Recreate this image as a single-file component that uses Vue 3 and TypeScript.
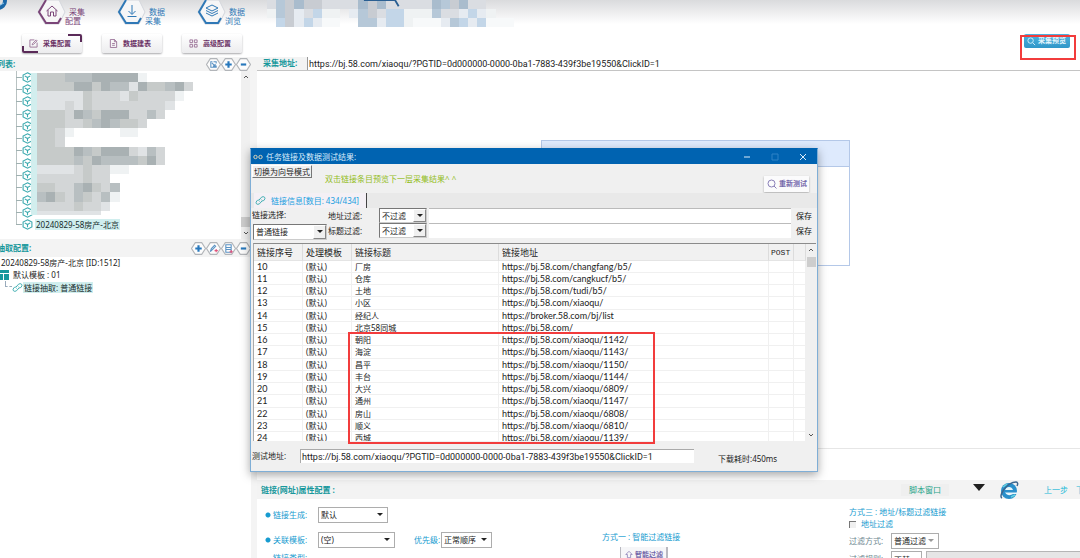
<script setup lang="ts">
import { ref } from 'vue'

interface LinkRow { id: number; title: string; url: string }

const collectUrl = ref('https://bj.58.com/xiaoqu/?PGTID=0d000000-0000-0ba1-7883-439f3be19550&ClickID=1')
const testUrl = ref(collectUrl.value)
const urlFilter = ref('')
const titleFilter = ref('')

const host = 'https://bj.58.com/'
const rows: LinkRow[] = [
  { id: 10, title: '厂房', url: host + 'changfang/b5/' },
  { id: 11, title: '仓库', url: host + 'cangkucf/b5/' },
  { id: 12, title: '土地', url: host + 'tudi/b5/' },
  { id: 13, title: '小区', url: host + 'xiaoqu/' },
  { id: 14, title: '经纪人', url: 'https://broker.58.com/bj/list' },
  { id: 15, title: '北京58同城', url: host },
  { id: 16, title: '朝阳', url: host + 'xiaoqu/1142/' },
  { id: 17, title: '海淀', url: host + 'xiaoqu/1143/' },
  { id: 18, title: '昌平', url: host + 'xiaoqu/1150/' },
  { id: 19, title: '丰台', url: host + 'xiaoqu/1144/' },
  { id: 20, title: '大兴', url: host + 'xiaoqu/6809/' },
  { id: 21, title: '通州', url: host + 'xiaoqu/1147/' },
  { id: 22, title: '房山', url: host + 'xiaoqu/6808/' },
  { id: 23, title: '顺义', url: host + 'xiaoqu/6810/' },
  { id: 24, title: '西城', url: host + 'xiaoqu/1139/' },
]

const tasks = Array.from({ length: 13 }, (_, i) => (i === 12 ? '20240829-58房产-北京' : ''))

/* Redacted areas: one letter per mosaic tile */
const shades: Record<string, string> = {
  a: '#a9b1b3', b: '#b8bfc1', c: '#c6cac9', d: '#d3d6d7', e: '#e0e3e5', f: '#eff2f3',
  m: '#a9bccd', n: '#b6c8d8', o: '#c3d6e8', p: '#c8ccd2', q: '#dadde2', r: '#e6ebf1', s: '#f7f9fa',
}
function tiles(lines: string[]) {
  return lines.flatMap((line, y) =>
    [...line].map((key, x) => ({ x, y, fill: shades[key] ?? 'none' })).filter((t) => t.fill !== 'none'),
  )
}
const taskMosaic = tiles([
  'cccbbbaaaaaf', 'ccccaacabbeaccbad', 'eeeeecdddecddddf', 'eeedecdddddddde', 'cccdabcaaaddbd',
  'cccddcbabccd', 'ccdf.....ff', 'ccd', 'ccccabcaaadebd', 'ccccbcabbbbcad', 'eeeedcddff',
  'dddddcdd', 'ccddbacdb', 'bacdbcdbf', 'ddddcdde', 'eeeeeee',
])
const headMosaic = tiles([
  'qnpmppqqqqmpmqqqqqmnpmqq', 'fnprqoff.rnpqoofffnqqrorf', '.oprorss..nnroofsssrnorosss',
])
</script>

<template>
  <div class="page">
    <header class="top">
      <div class="modules">
        <svg class="logo" viewBox="0 0 8 11"><circle cx="-2" cy="1" r="7" fill="none" stroke="#1b68a8" stroke-width="4" /><path d="M0 5L4 3" stroke="#8cc4e8" /></svg>
        <a class="module plum" href="#">
          <svg viewBox="0 0 30 26"><path class="hex" d="M8 1H22L28 13L22 25H8L1 13Z" /><path class="edge" d="M9 1L2 13L9 24H21L24 19" /><path class="glyph" d="M9.500 12L15 7L20.500 12M11 11V17H13.500V13H16.500V17H19V11" /></svg>
          <span><b>采集</b><b>配置</b></span>
        </a>
        <a class="module blue" href="#">
          <svg viewBox="0 0 30 26"><path class="hex" d="M8 1H22L28 13L22 25H8L1 13Z" /><path class="edge" d="M9 1L2 13L9 24H21L24 19" /><path class="glyph" d="M15 6V15M11.500 12L15 15.500L18.500 12M10.500 17.500H19.500" /></svg>
          <span><b>数据</b><b>采集</b></span>
        </a>
        <a class="module blue" href="#">
          <svg viewBox="0 0 30 26"><path class="hex" d="M8 1H22L28 13L22 25H8L1 13Z" /><path class="edge" d="M9 1L2 13L9 24H21L24 19" /><path class="glyph" d="M15 6L21 9L15 12L9 9ZM9 11.500L15 14.500L21 11.500M9 14L15 17L21 14" /></svg>
          <span><b>数据</b><b>浏览</b></span>
        </a>
        <svg class="head-mosaic" viewBox="0 0 28 3" preserveAspectRatio="none">
          <g shape-rendering="crispEdges">
            <rect v-for="t in headMosaic" :key="`${t.x}-${t.y}`" :x="t.x" :y="t.y" width="1" height="1" :fill="t.fill" />
          </g>
          <path d="M10.600 0H14L14.400 .7" stroke="#2a5f92" stroke-width=".2" />
        </svg>
      </div>
      <div class="actions">
        <button class="action current"><svg viewBox="0 0 10 10"><path d="M9 4V9H1V1H6M3.500 6.500L4 5L8 1L9 2L5 6Z" /></svg>采集配置</button>
        <button class="action"><svg viewBox="0 0 10 10"><path d="M1.500 .5H6L8.500 3V9.500H1.500ZM6 .5V3H8.500M3.500 5H6.500M3.500 7H6.500" /></svg>数据建表</button>
        <button class="action"><svg viewBox="0 0 10 10"><path d="M1 1H4V4H1ZM6 1H9V4H6ZM1 6H4V9H1ZM6 6H9V9H6Z" /></svg>高级配置</button>
        <div class="preview-wrap">
          <button class="preview"><svg viewBox="0 0 10 10"><circle cx="4" cy="4" r="3" /><path d="M6.500 6.500L9 9" /></svg>采集预览</button>
          <i class="mark"></i>
        </div>
      </div>
    </header>

    <div class="work">
      <aside class="side">
        <div class="bar">
          <strong class="cut">列表:</strong>
          <button aria-label="编辑" class="hexbtn"><svg viewBox="0 0 14 12"><path class="h" d="M4 .5H10L13.500 6L10 11.500H4L.5 6Z" /><path class="g thin" d="M6 3.500H4.500V8.500H9.500V7M7 3.500H9.500V5M5.500 4.500L8.500 7.500M8.500 5.500V7.500H6.500" /></svg></button>
          <button aria-label="添加" class="hexbtn"><svg viewBox="0 0 14 12"><path class="h" d="M4 .5H10L13.500 6L10 11.500H4L.5 6Z" /><path class="g wide" d="M7 3V9M4 6H10" /></svg></button>
          <button aria-label="删除" class="hexbtn"><svg viewBox="0 0 14 12"><path class="h" d="M4 .5H10L13.500 6L10 11.500H4L.5 6Z" /><path class="g wide" d="M4.500 6H9.500" /></svg></button>
        </div>
        <div class="tasks">
          <ul>
            <li v-for="(name, i) in tasks" :key="i">
              <i class="twig"></i>
              <svg class="cube" viewBox="0 0 10 10"><path d="M5 .7L9 2.800V7.200L5 9.300L1 7.200V2.800ZM2.500 3.500L5 5L7.500 3.500M5 5V7.500" /></svg>
              <span v-if="name" class="chosen">{{ name }}</span>
            </li>
          </ul>
          <svg class="task-mosaic" viewBox="0 0 17 16" preserveAspectRatio="none" shape-rendering="crispEdges">
            <rect x="-.6" y="0" width=".6" height="15.500" fill="#d2eeee" />
            <rect v-for="t in taskMosaic" :key="`${t.x}-${t.y}`" :x="t.x" :y="t.y" width="1" :height="t.y === 15 ? 0.5 : 1" :fill="t.fill" />
          </svg>
          <div class="scroll"><svg viewBox="0 0 6 4"><path d="M1 3L3 1L5 3" /></svg><i></i><svg viewBox="0 0 6 4"><path d="M1 1L3 3L5 1" /></svg></div>
        </div>
        <div class="bar tall">
          <strong class="cut">抽取配置:</strong>
          <button aria-label="新建" class="hexbtn"><svg viewBox="0 0 14 12"><path class="h" d="M4 .5H10L13.500 6L10 11.500H4L.5 6Z" /><path class="g wide" d="M7 3V9M4 6H10" /></svg></button>
          <button aria-label="链接" class="hexbtn"><svg viewBox="0 0 14 12"><path class="h" d="M4 .5H10L13.500 6L10 11.500H4L.5 6Z" /><path class="g thin" d="M4 9L5 6L8 3L9 4L6 7L4 9" /><path class="r" d="M8 8H11M9.500 6.500V9.500" /></svg></button>
          <button aria-label="数据" class="hexbtn"><svg viewBox="0 0 14 12"><path class="h" d="M4 .5H10L13.500 6L10 11.500H4L.5 6Z" /><path class="g thin" d="M4.500 2.500H9.500V9.500H4.500ZM4.500 5H9.500M4.500 7H9.500" /><path class="r" d="M8 9H11M9.500 7.500V10.500" /></svg></button>
          <button aria-label="移除" class="hexbtn"><svg viewBox="0 0 14 12"><path class="h" d="M4 .5H10L13.500 6L10 11.500H4L.5 6Z" /><path class="g wide" d="M4.500 6H9.500" /></svg></button>
        </div>
        <div class="rules">
          <p>20240829-58房产-北京 [ID:1512]</p>
          <p><svg class="tpl" viewBox="0 0 10 10"><path d="M0 0H9V3H0ZM0 4H3V10H0ZM4 4H9V10H4Z" /></svg>默认模板 : 01</p>
          <p class="leaf"><i></i><svg class="chain" viewBox="0 0 12 12"><path d="M5 7L4 6L7 2.500Q9 1 10.500 2.500Q11.500 4 10 5.500L8.500 7M7 5L8 6L5 9.500Q3 11 1.500 9.500Q.5 8 2 6.500L3.500 5" /></svg><span class="chosen">链接抽取: 普通链接</span></p>
        </div>
      </aside>

      <main class="main">
        <div class="address">
          <label for="collect">采集地址:</label>
          <input id="collect" v-model="collectUrl" class="long-url" type="text">
        </div>
        <div class="canvas"><div class="node"><i></i></div></div>
        <section class="props">
          <div class="props-head">
            <strong>链接(网址)属性配置 :</strong>
            <button class="script">脚本窗口</button>
            <svg class="tri" viewBox="0 0 12 7"><path d="M0 0H12L6 7Z" /></svg>
            <svg class="ie" viewBox="0 0 20 18"><circle cx="10" cy="10" r="8" fill="#2a8fcb" /><path d="M6 9Q7 6 10 6Q13 6 14 9ZM6 11.500H19V13H14Q12 14.500 9 14Q7 13 6 11.500Z" fill="#e8f6fb" /><path d="M3 17C-1 15 8 1 17 1C19 1 19 3 18 5" stroke="#3c668f" stroke-width="1.500" /><path d="M4 6L8 3M12 16L16 14" stroke="#62d2e0" stroke-width="1.500" /></svg>
            <a class="step" href="#">上一步</a>
            <a class="step next" href="#">下一步</a>
          </div>
          <div class="props-body">
            <div class="col-a">
              <div class="line"><label class="dot" for="gen">链接生成:</label><span class="pick w70"><select id="gen"><option>默认</option></select></span></div>
              <div class="line"><label class="dot" for="tpl">关联模板:</label><span class="pick w77"><select id="tpl"><option>(空)</option></select></span><label class="prio" for="prio">优先级:</label><span class="pick w51"><select id="prio"><option>正常顺序</option></select></span></div>
              <div class="line short"><span class="dot none">链接类型:</span></div>
            </div>
            <div class="col-b">
              <p>方式一 : 智能过滤链接</p>
              <button class="smart"><svg viewBox="0 0 10 10"><path d="M5 1L9 5H7V9H3V5H1Z" /></svg>智能过滤</button>
            </div>
            <div class="col-c">
              <p>方式三 : 地址/标题过滤链接</p>
              <label class="check"><input type="checkbox">地址过滤</label>
              <div class="line tight"><label for="mode">过滤方式:</label><span class="pick gray w48"><select id="mode"><option>普通过滤</option></select></span></div>
              <div class="line tight"><label for="rule">过滤规则:</label><input id="rule" class="rule" type="text" value="不替"><i class="well"></i></div>
            </div>
          </div>
        </section>
      </main>
    </div>

    <section class="dialog" role="dialog" aria-label="任务链接及数据测试结果">
      <div class="title">
        <svg class="eyes" viewBox="0 0 10 6"><circle cx="2.500" cy="3" r="1.700" /><circle cx="7.500" cy="3" r="1.700" /></svg>
        <span>任务链接及数据测试结果:</span>
        <button aria-label="最小化"><svg viewBox="0 0 8 8"><path d="M1 4H7" /></svg></button>
        <button aria-label="最大化" disabled><svg viewBox="0 0 8 8"><path d="M1 1H7V7H1Z" /></svg></button>
        <button aria-label="关闭"><svg viewBox="0 0 8 8"><path d="M1 1L7 7M7 1L1 7" /></svg></button>
      </div>
      <div class="tools">
        <button class="switch">切换为向导模式</button>
        <span class="hint">双击链接条目预览下一层采集结果^ ^</span>
        <button class="retest"><svg viewBox="0 0 10 10"><circle cx="4.500" cy="4.500" r="3.500" /><path d="M7 7L9.500 9.500" /></svg>重新测试</button>
      </div>
      <div class="tabs">
        <button class="tab"><svg class="chain" viewBox="0 0 12 12"><path d="M5 7L4 6L7 2.500Q9 1 10.500 2.500Q11.500 4 10 5.500L8.500 7M7 5L8 6L5 9.500Q3 11 1.500 9.500Q.5 8 2 6.500L3.500 5" /></svg>链接信息[数目: 434/434]</button>
      </div>
      <div class="filters">
        <div class="kind"><label for="kind">链接选择:</label><span class="pick old"><select id="kind"><option>普通链接</option></select></span></div>
        <div class="conds">
          <div class="cond"><label for="fu">地址过滤:</label><span class="pick old"><select id="fu"><option>不过滤</option></select></span><input v-model="urlFilter" type="text" aria-label="地址过滤内容"><button>保存</button></div>
          <div class="cond"><label for="ft">标题过滤:</label><span class="pick old"><select id="ft"><option>不过滤</option></select></span><input v-model="titleFilter" type="text" aria-label="标题过滤内容"><button>保存</button></div>
        </div>
      </div>
      <div class="list">
        <div class="list-view">
          <table>
            <colgroup><col class="c1"><col class="c2"><col class="c3"><col><col class="c5"><col class="c6"></colgroup>
            <thead><tr><th>链接序号</th><th>处理模板</th><th>链接标题</th><th>链接地址</th><th class="post">POST</th><th></th></tr></thead>
            <tbody>
              <tr v-for="r in rows" :key="r.id"><td class="url">{{ r.id }}</td><td>(默认)</td><td>{{ r.title }}</td><td class="url">{{ r.url }}</td><td></td><td></td></tr>
            </tbody>
          </table>
        </div>
        <div class="scroll up"><svg viewBox="0 0 6 4"><path d="M1 3L3 1L5 3" /></svg><i></i><svg viewBox="0 0 6 4"><path d="M1 1L3 3L5 1" /></svg></div>
      </div>
      <div class="foot">
        <label for="test">测试地址:</label>
        <input id="test" v-model="testUrl" class="long-url" type="text">
        <span>下载耗时:450ms</span>
      </div>
      <i class="mark rows"></i>
    </section>
  </div>
</template>

<style>
body { margin: 0; }
</style>

<style scoped>
* { box-sizing: border-box; }
.page { position: relative; height: 100vh; overflow: hidden; display: flex; flex-direction: column; background: #fff; color: #222; font: 8px/12px "Noto Sans", "Noto Sans CJK SC", sans-serif; }
button, input, select { font: inherit; color: inherit; margin: 0; padding: 0; border: 0; background: none; border-radius: 0; }
a { color: inherit; text-decoration: none; }
p, ul { margin: 0; padding: 0; list-style: none; }
svg { display: block; flex: none; fill: none; }

.top { flex: none; height: 57px; background: linear-gradient(#dadbdd, #fff 24px); }
.modules { display: flex; height: 34px; align-items: flex-start; }
.logo { width: 8px; height: 11px; margin-right: 29px; }
.module { display: flex; width: 80px; height: 26px; }
.module svg { width: 30px; height: 26px; margin-top: -1px; }
.module span { margin-left: -2px; padding-top: 7px; }
.module b { display: block; font-weight: 400; line-height: 9px; }
.module b:first-child { padding-left: 4px; }
.hex { fill: #f6f6f7; stroke: #d3d6dc; stroke-width: 1; }
.edge { stroke: currentColor; stroke-width: 2; }
.glyph { stroke: currentColor; stroke-width: 1; }
.plum { color: #7a4578; }
.blue { color: #2f78b6; }
.head-mosaic { width: 256px; height: 27px; margin-left: -10px; }
.actions { display: flex; gap: 20px; padding-left: 22px; align-items: flex-start; }
.action { display: flex; align-items: center; gap: 5px; width: 60px; height: 19px; padding-left: 7px; border-radius: 2px; color: #6a3064; font-size: 7px; font-weight: 700; background: linear-gradient(#fff, #ececee); box-shadow: 0 1px 2px #a8a8ac; white-space: nowrap; }
.action svg { width: 9px; height: 9px; stroke: #9a7096; }
.current { background: linear-gradient(#5a2a58, #5a2a58) right top / 14px 2px no-repeat, linear-gradient(#5a2a58, #5a2a58) right top / 2px 8px no-repeat, linear-gradient(#5a2a58, #5a2a58) left bottom / 16px 2px no-repeat, linear-gradient(#5a2a58, #5a2a58) left bottom / 2px 7px no-repeat, linear-gradient(#fff, #ececee); }
.preview-wrap { position: relative; margin-left: auto; margin-right: 10px; }
.preview { display: flex; align-items: center; gap: 2px; height: 14px; width: 46px; padding-left: 3px; border-radius: 2px; background: linear-gradient(#4db2de, #3097c8); color: #e4f5fc; font-size: 7px; font-weight: 700; white-space: nowrap; }
.preview svg { width: 9px; height: 9px; stroke: #d8f0fa; }
.mark { position: absolute; left: -4px; top: 1px; width: 56px; height: 25px; border: 2px solid #f23c3c; pointer-events: none; }

.work { flex: 1; min-height: 0; display: flex; }
.side { flex: none; width: 257px; background: #f4f4f4; }
.bar { display: flex; align-items: center; height: 14px; padding-right: 6px; background: #f3f3f3; }
.bar.tall { height: 18px; }
.cut { margin-left: -3px; margin-right: auto; color: #17989c; }
.hexbtn { width: 15px; height: 13px; }
.hexbtn svg { width: 15px; height: 13px; }
.h { fill: #fcfcfc; stroke: #b2b5b9; }
.g { stroke: #2878bc; stroke-width: 1; }
.thin { stroke: #5b93c4; }
.wide { stroke-width: 2; }
.r { stroke: #e0527a; }
.tasks { position: relative; display: flex; height: 168px; }
.tasks ul { flex: 1; display: grid; grid-template-rows: repeat(13, 1fr); padding-bottom: 8px; background: #fff; }
.tasks li { display: flex; align-items: center; padding-left: 16px; background: linear-gradient(#b9c2c2, #b9c2c2) 16px 0 / 1px 100% no-repeat; }
.tasks li:last-child { background-size: 1px 50%; }
.twig { width: 6px; border-top: 1px dashed #9fb0b0; }
.cube { width: 11px; height: 11px; stroke: #3aa9ae; margin-right: 2px; }
.chosen { background: #d0eeee; padding: 0 1px; line-height: 11px; color: #162c2c; }
.task-mosaic { position: absolute; left: 37px; top: 2px; width: 156px; height: 147px; overflow: visible; }
.scroll { display: flex; flex-direction: column; flex: none; width: 9px; margin-right: 7px; padding: 4px 0; align-items: center; background: #f0f0f0; }
.scroll svg { width: 6px; height: 4px; stroke: #555; }
.scroll i { width: 9px; height: 10px; margin-top: auto; background: #cdcdcd; }
.scroll i + svg { margin-top: 4px; }
.rules { height: 100%; margin-right: 6px; padding-left: 1px; background: #fff; }
.rules p { display: flex; align-items: center; height: 12px; white-space: nowrap; }
.tpl { width: 10px; height: 10px; margin: 0 3px 0 -1px; fill: #17989c; }
.leaf i { width: 7px; height: 6px; margin: -6px 0 0 4px; border-left: 1px dashed #9ab; border-bottom: 1px dashed #9ab; }
.chain { width: 11px; height: 11px; stroke: #32a8ac; }

.main { flex: 1; min-width: 0; display: flex; flex-direction: column; }
.address { display: flex; height: 14px; flex: none; border-bottom: 1px solid #c4c4c4; }
.address label { width: 50px; padding-left: 6px; color: #17989c; font-weight: 700; background: #f3f3f3; }
.address input { flex: 1; border-left: 1px solid #999; padding-left: 1px; }
.url { font-family: Lato, "Noto Sans", sans-serif; font-size: 9px; }
.long-url { font-family: Roboto, "Noto Sans", sans-serif; font-size: 9px; }
.canvas { position: relative; flex: none; height: 378px; border-bottom: 1px solid #e6e6e6; }
.node { position: absolute; left: 284px; top: 69px; width: 309px; height: 126px; border: 1px solid #b4c8e8; }
.node i { display: block; height: 26px; background: #deeafd; border-bottom: 1px solid #b4c8e8; }
.props { padding-top: 31px; }
.props-head { display: flex; align-items: center; height: 19px; padding-left: 4px; background: #f3f3f3; white-space: nowrap; }
.props-head strong { color: #17989c; margin-right: auto; }
.script { width: 48px; height: 12px; color: #25a489; background: #efefef; }
.tri { width: 12px; height: 7px; margin: -4px 14px 0 24px; fill: #202020; }
.ie { width: 20px; height: 18px; margin-right: 25px; }
.step { color: #22b9d8; width: 32px; overflow: hidden; }
.next { width: 4px; }
.props-body { display: flex; height: 90px; color: #169bd0; white-space: nowrap; }
.col-a { width: 345px; padding-top: 8px; }
.line { display: flex; align-items: center; height: 25px; }
.line:first-child { height: 16px; margin-bottom: 4px; }
.dot { width: 61px; padding-left: 16px; background: radial-gradient(circle, #169bd0 2px, transparent 3px) 8px 50% / 6px 6px no-repeat; }
.none { background: none; }
.short { height: 12px; }
.prio { margin-left: 19px; width: 27px; }
.pick { position: relative; display: inline-flex; height: 16px; border: 1px solid #adadad; background: #fff; color: #222; }
.pick select { appearance: none; width: 100%; padding: 0 2px; outline: 0; }
.pick::after { content: ""; position: absolute; right: 4px; top: 5px; border: 3px solid transparent; border-top: 3px solid #222; border-bottom: 0; pointer-events: none; }
.pick.gray::after { border-top-color: #999; }
.w70 { width: 70px; } .w77 { width: 77px; } .w51 { width: 51px; } .w48 { width: 48px; }
.col-b { width: 247px; padding-top: 32px; }
.smart { display: flex; align-items: center; gap: 2px; width: 48px; height: 16px; margin: 4px 0 0 18px; padding-left: 4px; border: 1px solid #b9b9c0; border-width: 0 2px 1px 1px; background: #f6f6f8; color: #7468aa; font-size: 7px; font-weight: 700; }
.smart svg { width: 8px; height: 9px; stroke: #8a7fb8; }
.col-c { flex: 1; padding-top: 7px; }
.check { display: flex; align-items: center; gap: 5px; height: 12px; }
.check input { appearance: none; width: 7px; height: 7px; border: 1px solid #777; border-width: 1px 0 0 1px; background: #f0f0f0; }
.tight { height: 18px; margin-top: 2px; color: #6d8790; }
.tight + .tight { margin-top: 0; }
.tight label { width: 42px; }
.rule { width: 31px; height: 16px; padding-left: 2px; border: 1px solid #adadad; color: #222; }
.well { flex: 1; height: 16px; margin-left: 4px; background: #e6e6e6; border: 1px solid #b5b5b5; border-right: 0; }

.dialog { position: absolute; left: 250px; top: 148px; width: 568px; display: flex; flex-direction: column; background: #f0f0f0; border: 1px solid #7faed6; border-top-color: #0063b1; box-shadow: 0 3px 9px rgba(0, 0, 0, .35); white-space: nowrap; }
.title { display: flex; align-items: center; height: 15px; padding: 0 0 0 2px; background: #0063b1; color: #d8ecfb; }
.title span { margin: 0 auto 0 3px; }
.title button { width: 28px; height: 15px; display: grid; place-items: center; }
.title svg { width: 8px; height: 8px; stroke: #dcecf8; stroke-width: 1; }
.title button:disabled svg { stroke: #2f83c6; }
.title .eyes { width: 10px; height: 8px; stroke: #d9d3b8; }
.tools { display: flex; align-items: flex-start; height: 29px; padding: 1px 8px 0 1px; }
.switch { width: 60px; height: 13px; line-height: 11px; border: 1px solid #fff; border-right-color: #777; border-bottom-color: #777; background: #f0f0f0; }
.hint { margin: 8px auto 0 13px; color: #93bd1c; }
.retest { display: flex; align-items: center; gap: 2px; width: 45px; height: 16px; margin-top: 11px; padding-left: 3px; color: #7468aa; background: #fbfbfc; box-shadow: 0 1px 2px #aaa; font-size: 7px; font-weight: 700; }
.retest svg { width: 10px; height: 10px; stroke: #8a7fb8; }
.tabs { display: flex; height: 15px; padding-left: 3px; background: #e9e9e9; }
.tab { display: flex; align-items: center; width: 113px; padding-left: 1px; gap: 5px; color: #1b9fe0; background: #f4f0f5; border-right: 1px solid #444; }
.filters { display: flex; padding-left: 1px; height: 34px; }
.kind { width: 76px; display: flex; flex-direction: column; gap: 3px; padding-top: 1px; }
.kind .pick { width: 74px; height: 16px; margin-left: 1px; flex: none; }
.conds { flex: 1; }
.cond { display: flex; height: 15px; align-items: center; }
.cond label { width: 51px; }
.cond .pick { width: 48px; height: 15px; margin-right: 2px; }
.cond input { flex: 1; height: 15px; background: #fff; border-top: 1px solid #bbb; }
.cond button { width: 26px; color: #111; }
.old { border-color: #777 #ccc #ccc #777; }
.old::after { right: 3px; top: 5px; }
.old::before { content: ""; position: absolute; right: 0; top: 0; bottom: 0; width: 11px; background: #f0f0f0; border: 1px solid #fff; border-right-color: #888; border-bottom-color: #888; pointer-events: none; }
.list { display: flex; height: 198px; margin: 1px 1px 0 2px; border-top: 1px solid #8b8b8b; border-left: 1px solid #aaa; background: #fff; }
.list-view { flex: 1; overflow: hidden; }
table { width: 100%; table-layout: fixed; border-collapse: separate; border-spacing: 0; }
.c1 { width: 49px; } .c2 { width: 49px; } .c3 { width: 147px; } .c5 { width: 25px; } .c6 { width: 12px; }
th { height: 17px; padding: 0 0 0 3px; text-align: left; font-weight: 400; font-size: 9px; line-height: 13px; background: #f1f1f1; border-right: 1px solid #dcdcdc; border-bottom: 1px solid #e4e4e4; color: #222; }
th.post { padding: 0 0 0 2px; font-family: "Liberation Mono", monospace; font-size: 8px; }
td { height: 12px; padding: 0 0 0 3px; line-height: 11px; border-right: 1px solid #f0f0f0; border-bottom: 1px solid #f0f0f0; }
tbody tr:nth-child(4n) td { height: 13px; line-height: 12px; }
.scroll.up { width: 10px; margin: 0; }
.scroll.up i { width: 9px; margin: 5px 0 auto; }
.foot { display: flex; align-items: center; height: 30px; padding-left: 1px; }
.foot label { width: 48px; }
.foot input { width: 394px; height: 14px; padding-left: 1px; background: #fff; border-top: 1px solid #aaa; border-left: 1px solid #aaa; }
.foot span { margin: 5px 0 0 24px; }
.mark.rows { left: 97px; top: 183px; width: 307px; height: 112px; }
</style>
